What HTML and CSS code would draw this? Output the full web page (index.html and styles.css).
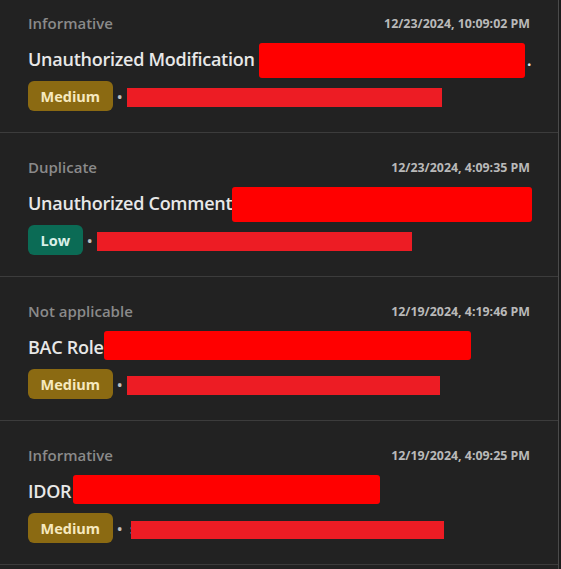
FILE: index.html
```html
<!DOCTYPE html>
<html>
<head>
<meta charset="utf-8">
<link rel="stylesheet" href="styles.css">
</head>
<body>
<div class="viewport">
  <div class="list">
    <div class="item">
      <div class="head"><span class="status">Informative</span><span class="date">12/23/2024, 10:09:02 PM</span></div>
      <div class="title"><span class="name">Unauthorized Modification</span><span class="redact tall spaced" style="width:266px"></span><span class="name">.</span></div>
      <div class="meta"><span class="badge medium">Medium</span><span class="dot">•</span><span class="bar" style="width:315px"></span></div>
    </div>
    <div class="item">
      <div class="head"><span class="status">Duplicate</span><span class="date">12/23/2024, 4:09:35 PM</span></div>
      <div class="title"><span class="name">Unauthorized Comment</span><span class="redact tall" style="width:300px"></span></div>
      <div class="meta"><span class="badge low">Low</span><span class="dot">•</span><span class="bar" style="width:315px"></span></div>
    </div>
    <div class="item">
      <div class="head"><span class="status">Not applicable</span><span class="date">12/19/2024, 4:19:46 PM</span></div>
      <div class="title"><span class="name">BAC Role</span><span class="redact short" style="width:367px"></span></div>
      <div class="meta"><span class="badge medium">Medium</span><span class="dot">•</span><span class="bar" style="width:313px"></span></div>
    </div>
    <div class="item">
      <div class="head"><span class="status">Informative</span><span class="date">12/19/2024, 4:09:25 PM</span></div>
      <div class="title"><span class="name">IDOR</span><span class="redact short idor" style="width:307px"></span></div>
      <div class="meta"><span class="badge medium">Medium</span><span class="dot">•</span><span class="peek">s</span><span class="bar thin" style="width:313px"></span></div>
    </div>
  </div>
</div>
</body>
</html>
```

FILE: styles.css
```css
html, body {
  margin: 0;
  padding: 0;
  background: #1c1c1c;
  font-family: "Open Sans", "Noto Sans", sans-serif;
}

.viewport {
  width: 558px;
  height: 569px;
  overflow: hidden;
  background: #222222;
  border-right: 1px solid #4a4a4a;
}

.list {
  margin-top: -11px;
}

.item {
  box-sizing: border-box;
  height: 144px;
  padding: 24px 28px 0 28px;
  border-bottom: 1px solid #3c3c3c;
}

.head {
  display: flex;
  justify-content: space-between;
  align-items: center;
  height: 20px;
}

.status {
  font-size: 15px;
  font-weight: 600;
  color: #8a8a8a;
}

.date {
  font-size: 12.4px;
  font-weight: 700;
  color: #b9b9b9;
}

.title {
  display: flex;
  align-items: flex-start;
  height: 35px;
  margin-top: 10px;
}

.name {
  font-size: 18px;
  font-weight: 600;
  letter-spacing: -0.26px;
  line-height: 32px;
  color: #e8e8e8;
  white-space: nowrap;
}

.redact {
  display: block;
  background: #ff0000;
  border-radius: 3px;
  flex: none;
}

.redact.tall { height: 35px; }
.redact.short { height: 29px; }
.redact.spaced { margin-left: 4px; margin-right: 2px; }
.redact.idor { margin-left: 2px; }

.meta {
  display: flex;
  align-items: center;
  margin-top: 3px;
  height: 30px;
}

.badge {
  box-sizing: border-box;
  height: 30px;
  display: flex;
  align-items: center;
  padding: 0 12.5px;
  border-radius: 6px;
  font-size: 14.5px;
  font-weight: 700;
}

.badge.medium {
  background: #8b6a12;
  color: #f6e9bf;
}

.badge.low {
  background: #0b6b55;
  color: #d9f0e7;
}

.dot {
  color: #c0c0c0;
  font-size: 17px;
  line-height: 1;
  margin-left: 4px;
}

.bar {
  display: block;
  height: 19px;
  margin-left: 3.5px;
  margin-top: 3px;
  background: #ed1c24;
}

.peek {
  color: #c0c0c0;
  font-size: 15px;
  font-weight: 600;
  margin-left: 7px;
}

.bar.thin { height: 18px; margin-left: -6px; }
```
